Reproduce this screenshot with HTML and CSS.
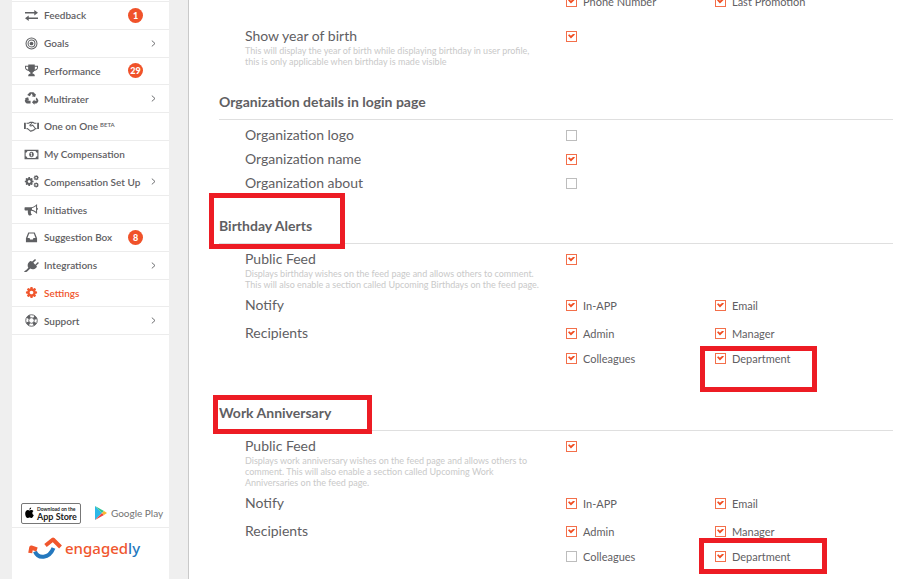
FILE: index.html
```html
<!DOCTYPE html>
<html lang="en">
<head>
<meta charset="utf-8">
<title>Settings - Engagedly</title>
<link rel="stylesheet" href="styles.css">
</head>
<body>
<svg class="sprite" aria-hidden="true">
  <symbol id="cog" viewBox="0 0 1792 1792"><path d="M1152 896q0-106-75-181t-181-75-181 75-75 181 75 181 181 75 181-75 75-181zm512-109v222q0 12-8 23t-20 13l-185 28q-19 54-39 91 35 50 107 138 10 12 10 25t-9 23q-27 37-99 108t-94 71q-12 0-26-9l-138-108q-44 23-91 38-16 136-29 186-7 28-36 28h-222q-14 0-24.5-8.5t-11.5-21.5l-28-184q-49-16-90-37l-141 107q-10 9-25 9-14 0-25-11-126-114-165-168-7-10-7-23 0-12 8-23 15-21 51-66.5t54-70.5q-27-50-41-99l-183-27q-13-2-21-12.5t-8-23.5v-222q0-12 8-23t19-13l186-28q14-46 39-92-40-57-107-138-10-12-10-24 0-10 9-23 26-36 98.500-107.500t94.500-71.500q13 0 26 10l138 107q44-23 91-38 16-136 29-186 7-28 36-28h222q14 0 24.500 8.500t11.500 21.500l28 184q49 16 90 37l142-107q9-9 24-9 13 0 25 10 129 119 165 170 7 8 7 22 0 12-8 23-15 21-51 66.500t-54 70.500q26 50 41 98l183 28q13 2 21 12.500t8 23.500z"/></symbol>
  <symbol id="chevron" viewBox="0 0 5 7"><path d="M.8.6 4 3.500.8 6.400" fill="none" stroke="currentColor" stroke-width=".9"/></symbol>
</svg>
<div class="shell">
  <aside class="sidebar">
    <nav>
      <ul class="menu">
        <li><a href="#"><svg class="icon" viewBox="0 0 16 14"><path d="M1 3.200h10V1l4 3-4 3V4.900H1zM15 9.200H5V7L1 10l4 3v-2.200h10z"/></svg>Feedback<span class="badge">1</span></a></li>
        <li><a href="#"><svg class="icon" viewBox="0 0 16 14"><g fill="none" stroke="currentColor" stroke-width="1.100"><circle cx="8" cy="7" r="5.900"/><circle cx="8" cy="7" r="3.700"/></g><circle cx="8" cy="7" r="2"/></svg>Goals<svg class="chevron"><use href="#chevron"/></svg></a></li>
        <li><a href="#"><svg class="icon" viewBox="0 0 16 14"><path d="M4.500.5h7v1.300H15v2c0 2-1.700 3.400-4 3.700-.5.800-1.200 1.300-1.800 1.700v1.400c1.300 0 2.300.7 2.300 1.900v.7h-7v-.7c0-1.200 1-1.900 2.300-1.900V9.200C6.200 8.800 5.500 8.300 5 7.500 2.700 7.200 1 5.800 1 3.800v-2h3.500zM2 2.900v.9c0 1 .9 2 2.400 2.400C4.300 5.200 4.400 4 4.400 2.900zm9.600 0c0 1.100.1 2.300-.1 3.300C13.100 5.800 14 4.800 14 3.800v-.9z"/></svg>Performance<span class="badge">29</span></a></li>
        <li><a href="#"><svg class="icon" viewBox="0 0 16 14"><path d="M5.400 1.200C5.700.6 6.100.4 6.700.4h3.100c.6 0 1 .3 1.300.8l.8 1.300 1-.6-1 3.600-3.700-.9 1.200-.7L8 1.500 6.200 4.600 3.400 3.100zM13.600 6l1.600 2.700c.3.600.3 1.100 0 1.600l-.8 1.400c-.3.600-.8.800-1.400.8h-1.800v1.300L8.500 11l2.700-2.800v1.300h2.300l-1-1.900zM7 9.500v3H3.200c-.6 0-1.100-.2-1.400-.8L1 10.300c-.3-.5-.3-1 0-1.600l.8-1.400-1.100-.6 3.700-1 1 3.700-1.200-.7-.4.800z"/></svg>Multirater<svg class="chevron"><use href="#chevron"/></svg></a></li>
        <li><a href="#"><svg class="icon" viewBox="0 0 18 14"><g fill="none" stroke="currentColor" stroke-width="1.300" stroke-linejoin="round"><path d="M3 3h2.500l2-1h3l2 1H15M3 9.500h1.200L7.500 12.300c.8.500 1.500.3 1.900-.3.700.3 1.300 0 1.600-.7.700.2 1.300-.2 1.400-.9.600 0 1-.4 1-.9H15M9.500 3.200 7 5.300c.3 1.500 1.800 1.300 3.300.1l3 3.400"/></g><path d="M0 2.500h2.200v7.500H0zM15.800 2.500H18v7.500h-2.200z"/></svg>One on One<sup>BETA</sup></a></li>
        <li><a href="#"><svg class="icon" viewBox="0 0 16 14"><path fill-rule="evenodd" d="M.5 2h15v10H.5zm3 1.200c0 1-.8 1.800-1.800 1.800v4c1 0 1.800.8 1.800 1.800h9c0-1 .8-1.800 1.800-1.800V5c-1 0-1.800-.8-1.800-1.800zM8 4c1.500 0 2.500 1.400 2.500 3S9.500 10 8 10 5.500 8.600 5.500 7 6.500 4 8 4zm-1 1.700v.7h.6v1.900H7V9h2v-.7h-.6V5h-.7z"/></svg>My Compensation</a></li>
        <li><a href="#"><svg class="icon" viewBox="0 0 16 14"><use href="#cog" x="0" y="1.500" width="11" height="11"/><use href="#cog" x="9.800" y="-.3" width="6.500" height="6.500"/><use href="#cog" x="9.800" y="7.500" width="6.500" height="6.500"/></svg>Compensation Set Up<svg class="chevron"><use href="#chevron"/></svg></a></li>
        <li><a href="#"><svg class="icon" viewBox="0 0 16 14"><path fill-rule="evenodd" d="M1 4.500h6.500C10 4.500 12 3 14 1v4.200c1.300.3 1.300 2 0 2.300v4.300c-2-2-4-3.400-6.500-3.500-.7.900.3 1.600-.2 2.500.1.800.8 1.200 1.300 1.700-.7 1.200-3 1-3.900.3-.4-1.500-1-2.900-.5-4.600H1.800C1 8.200.5 7.600.5 7V5.600c0-.6.200-1.100.5-1.100zm7.500 1v1.800c1.700.3 3 .9 4.400 2.100V3.300C11.500 4.500 10.200 5.200 8.500 5.500z"/></svg>Initiatives</a></li>
        <li><a href="#"><svg class="icon" viewBox="0 0 16 14"><path fill-rule="evenodd" d="M4.500 1.500h7l2.500 6.300v4.200H2V7.800zm1 1.300L3.700 7.500h2.200l.7 1.600h2.800l.7-1.600h2.200l-1.800-4.700z"/></svg>Suggestion Box<span class="badge">8</span></a></li>
        <li><a href="#"><svg class="icon" viewBox="0 0 16 14"><path d="m8.800 2.800 3-2.800 1.100 1.100-2.900 3 2 2 2.900-2.900L16 4.300l-3 3 1 1-1 1c-1.900 1.900-4.300 2.100-6.300 1L3.600 13.300c-1 .9-2.500.9-3.600.7.400-1.600 1.600-1.300 2.600-2.400l2-2.200c-1.200-2-.9-4.300.9-6.100l1.100-1.200z"/></svg>Integrations<svg class="chevron"><use href="#chevron"/></svg></a></li>
        <li><a href="#" class="active" aria-current="page"><svg class="icon" viewBox="0 0 16 14"><use href="#cog" x="1" y="0" width="14" height="14"/></svg>Settings</a></li>
        <li><a href="#"><svg class="icon" viewBox="0 0 16 14"><g fill="none" stroke="currentColor"><circle cx="8" cy="7" r="6.200"/><circle cx="8" cy="7" r="3"/><circle cx="8" cy="7" r="4.600" stroke-width="3.200" stroke-dasharray="3.200 4.026" stroke-dashoffset="-2"/></g></svg>Support<svg class="chevron"><use href="#chevron"/></svg></a></li>
      </ul>
    </nav>
    <div class="promo">
      <div class="stores">
        <a class="apple" href="#"><svg viewBox="0 0 10 12"><path d="M6.800 0C6.900 1.200 6 2.400 4.800 2.400 4.700 1.300 5.700.1 6.800 0zM5 3.200c.6 0 1.100-.5 2.100-.5 1 0 1.800.5 2.300 1.200C7.500 5.100 7.800 7.500 9.800 8.300 9.300 9.900 8.200 11.600 7.100 11.600c-.8 0-1-.5-2-.5s-1.300.5-2 .5C1.500 11.600.2 8.800.2 6.700c0-2.500 1.500-4 3-4 .8 0 1.400.5 1.800.5z"/></svg><span><small>Download on the</small>App Store</span></a>
        <a class="google" href="#"><svg viewBox="0 0 12 14"><path fill="#2bb8e8" d="M0 0v14l7-7z"/><path fill="#30c48d" d="M0 0l9 5-2 2z"/><path fill="#f0443e" d="M0 14l9-5-2-2z"/><path fill="#f8b62d" d="M9 5l3 2-3 2-2-2z"/></svg>Google Play</a>
      </div>
      <a class="brand" href="#"><svg viewBox="0 0 35 24"><path d="M7 15.500c3 7.500 14 7.500 18.500-3.500" fill="none" stroke="#2478be" stroke-width="4"/><path d="M2.200 17l1-5.500 5.800 2M17.500 9.500l7.500-6 7.500 7.500" fill="none" stroke="#f0562d" stroke-width="4" stroke-linejoin="round"/></svg><span>engaged<b>ly</b></span></a>
    </div>
  </aside>

  <main class="content">
    <section class="section profile">
      <div class="row">
        <span></span>
        <div class="options">
          <label class="option"><input type="checkbox" checked>Phone Number</label>
          <label class="option"><input type="checkbox" checked>Last Promotion</label>
        </div>
      </div>
      <div class="row spaced">
        <div class="text"><label for="year">Show year of birth</label><p>This will display the year of birth while displaying birthday in user profile, this is only applicable when birthday is made visible</p></div>
        <div class="options"><span class="option"><input type="checkbox" id="year" checked></span></div>
      </div>
    </section>

    <section class="section">
      <h2>Organization details in login page</h2>
      <div class="row"><div class="text"><label for="logo">Organization logo</label></div><div class="options"><span class="option"><input type="checkbox" id="logo"></span></div></div>
      <div class="row"><div class="text"><label for="name">Organization name</label></div><div class="options"><span class="option"><input type="checkbox" id="name" checked></span></div></div>
      <div class="row"><div class="text"><label for="about">Organization about</label></div><div class="options"><span class="option"><input type="checkbox" id="about"></span></div></div>
    </section>

    <section class="section alerts">
      <h2>Birthday Alerts<i class="mark mark-birthday"></i></h2>
      <div class="row">
        <div class="text"><label for="bfeed">Public Feed</label><p>Displays birthday wishes on the feed page and allows others to comment. This will also enable a section called Upcoming Birthdays on the feed page.</p></div>
        <div class="options"><span class="option"><input type="checkbox" id="bfeed" checked></span></div>
      </div>
      <div class="row group" role="group" aria-labelledby="bnotify">
        <div class="text" id="bnotify">Notify</div>
        <div class="options">
          <label class="option"><input type="checkbox" checked>In-APP</label>
          <label class="option"><input type="checkbox" checked>Email</label>
        </div>
      </div>
      <div class="row group" role="group" aria-labelledby="brec">
        <div class="text" id="brec">Recipients</div>
        <div class="options">
          <label class="option"><input type="checkbox" checked>Admin</label>
          <label class="option"><input type="checkbox" checked>Manager</label>
          <label class="option"><input type="checkbox" checked>Colleagues</label>
          <label class="option"><input type="checkbox" checked>Department<i class="mark mark-dept-birthday"></i></label>
        </div>
      </div>
    </section>

    <section class="section alerts">
      <h2>Work Anniversary<i class="mark mark-work"></i></h2>
      <div class="row">
        <div class="text"><label for="wfeed">Public Feed</label><p>Displays work anniversary wishes on the feed page and allows others to comment. This will also enable a section called Upcoming Work Anniversaries on the feed page.</p></div>
        <div class="options"><span class="option"><input type="checkbox" id="wfeed" checked></span></div>
      </div>
      <div class="row group" role="group" aria-labelledby="wnotify">
        <div class="text" id="wnotify">Notify</div>
        <div class="options">
          <label class="option"><input type="checkbox" checked>In-APP</label>
          <label class="option"><input type="checkbox" checked>Email</label>
        </div>
      </div>
      <div class="row group" role="group" aria-labelledby="wrec">
        <div class="text" id="wrec">Recipients</div>
        <div class="options">
          <label class="option"><input type="checkbox" checked>Admin</label>
          <label class="option"><input type="checkbox" checked>Manager</label>
          <label class="option"><input type="checkbox">Colleagues</label>
          <label class="option"><input type="checkbox" checked>Department<i class="mark mark-dept-work"></i></label>
        </div>
      </div>
    </section>
  </main>
</div>
</body>
</html>
```

FILE: styles.css
```css
* { box-sizing: border-box; }

body {
  margin: 0;
  background: #efefef;
  color: #5f6063;
  font-family: Lato, "Liberation Sans", sans-serif;
}

a { color: inherit; text-decoration: none; }

.sprite { position: absolute; width: 0; height: 0; }

.shell {
  display: flex;
  height: 100vh;
  overflow: hidden;
}

/* Sidebar */
.sidebar {
  display: flex;
  flex: 0 0 157px;
  flex-direction: column;
  min-width: 0;
  margin: 0 19px 0 12px;
  background: #fff;
}

.menu {
  display: grid;
  grid-auto-rows: 1fr;
  height: 334px;
  margin: 1px 0 0;
  padding: 0;
  border-top: 1px solid #ececec;
  list-style: none;
}

.menu li { border-bottom: 1px solid #ececec; }

.menu a {
  position: relative;
  display: flex;
  align-items: center;
  height: 100%;
  padding-left: 11px;
  font-size: 10px;
  font-weight: 600;
  white-space: nowrap;
}

.menu .active { color: #f0562d; }

.icon {
  flex: none;
  width: 15px;
  height: 13px;
  margin: 0 5px 0 1px;
  fill: currentColor;
}

.menu sup {
  align-self: flex-start;
  margin: 8px 0 0 2px;
  font-size: 6px;
  line-height: 8px;
}

.badge {
  position: absolute;
  left: 116px;
  width: 15px;
  height: 15px;
  border-radius: 50%;
  background: #f0522a;
  color: #fff;
  font-size: 9px;
  font-weight: 900;
  line-height: 15px;
  text-align: center;
}

.chevron {
  position: absolute;
  right: 13px;
  width: 5px;
  height: 7px;
}

.promo { margin-top: auto; }

.stores {
  display: flex;
  align-items: center;
  height: 27px;
  gap: 14px;
  padding: 0 6px 2px 9px;
  border-bottom: 1px solid #ececec;
  white-space: nowrap;
}

.apple {
  display: flex;
  align-items: center;
  height: 21px;
  gap: 3px;
  padding: 0 3px;
  border: 1px solid #777;
  border-radius: 2px;
  color: #222;
  font-size: 9px;
  font-weight: 700;
  line-height: 9px;
}

.apple svg { width: 9px; height: 12px; }

.apple small {
  display: block;
  font-size: 5px;
  line-height: 6px;
}

.google {
  display: flex;
  align-items: center;
  gap: 4px;
  color: #737373;
  font-size: 10px;
}

.google svg { width: 12px; height: 14px; }

.brand {
  display: flex;
  align-items: center;
  height: 51px;
  padding: 0 0 11px 16px;
  gap: 2px;
  color: #f0562d;
  font-family: "Noto Sans", "Open Sans", sans-serif;
  font-size: 15px;
  font-weight: 500;
}

.brand svg { width: 35px; height: 24px; }

.brand b { color: #2478be; font-weight: 500; }

/* Settings */
.content {
  flex: 1;
  min-width: 0;
  padding: 0 19px 0 30px;
  border-left: 1px solid #c9c9c9;
  background: #fff;
}

.section { padding-bottom: 15px; }

.profile {
  margin-top: -11px;
  padding-bottom: 16px;
}

.alerts { padding-bottom: 23px; }

h2 {
  position: relative;
  margin: 0 0 3px;
  padding-bottom: 2px;
  border-bottom: 1px solid #dfdfdf;
  font-size: 14px;
  font-weight: 700;
  line-height: 31px;
}

.row {
  display: grid;
  grid-template-columns: 321fr 327fr;
  align-items: start;
  padding-left: 26px;
}

.spaced { margin-top: 11px; }

.group { margin-bottom: 4px; }

.text {
  padding: 3px 0;
  font-size: 14px;
  line-height: 18px;
}

.text label { display: block; }

.text p {
  max-width: 298px;
  margin: 0;
  color: #c9c9c9;
  font-size: 9px;
  line-height: 11px;
}

.options {
  display: grid;
  grid-template-columns: 149fr 178fr;
  row-gap: 1px;
}

.option {
  position: relative;
  display: flex;
  align-items: center;
  height: 24px;
  gap: 6px;
  font-size: 11px;
}

.option input {
  flex: none;
  width: 11px;
  height: 11px;
  margin: 0;
  border: 1px solid #bdbdbd;
  background: #fff;
  appearance: none;
}

.option input:checked { border-color: #f36f4a; }

.option input:checked::before {
  display: block;
  width: 7px;
  height: 5px;
  margin: 2px 1px;
  background: #f04e23;
  clip-path: polygon(0 35%, 18% 15%, 42% 45%, 80% 0, 100% 22%, 42% 100%);
  content: "";
}

/* Red frames drawn over the settings */
.mark {
  position: absolute;
  z-index: 1;
  border: 5px solid #ed1c24;
  pointer-events: none;
}

.mark-birthday { top: -17px; left: -10px; width: 136px; height: 56px; }
.mark-work { top: -2px; left: -6px; width: 159px; height: 39px; }
.mark-dept-birthday { top: 0; left: -15px; width: 117px; height: 46px; }
.mark-dept-work { top: -6px; left: -16px; width: 128px; height: 36px; }
```
